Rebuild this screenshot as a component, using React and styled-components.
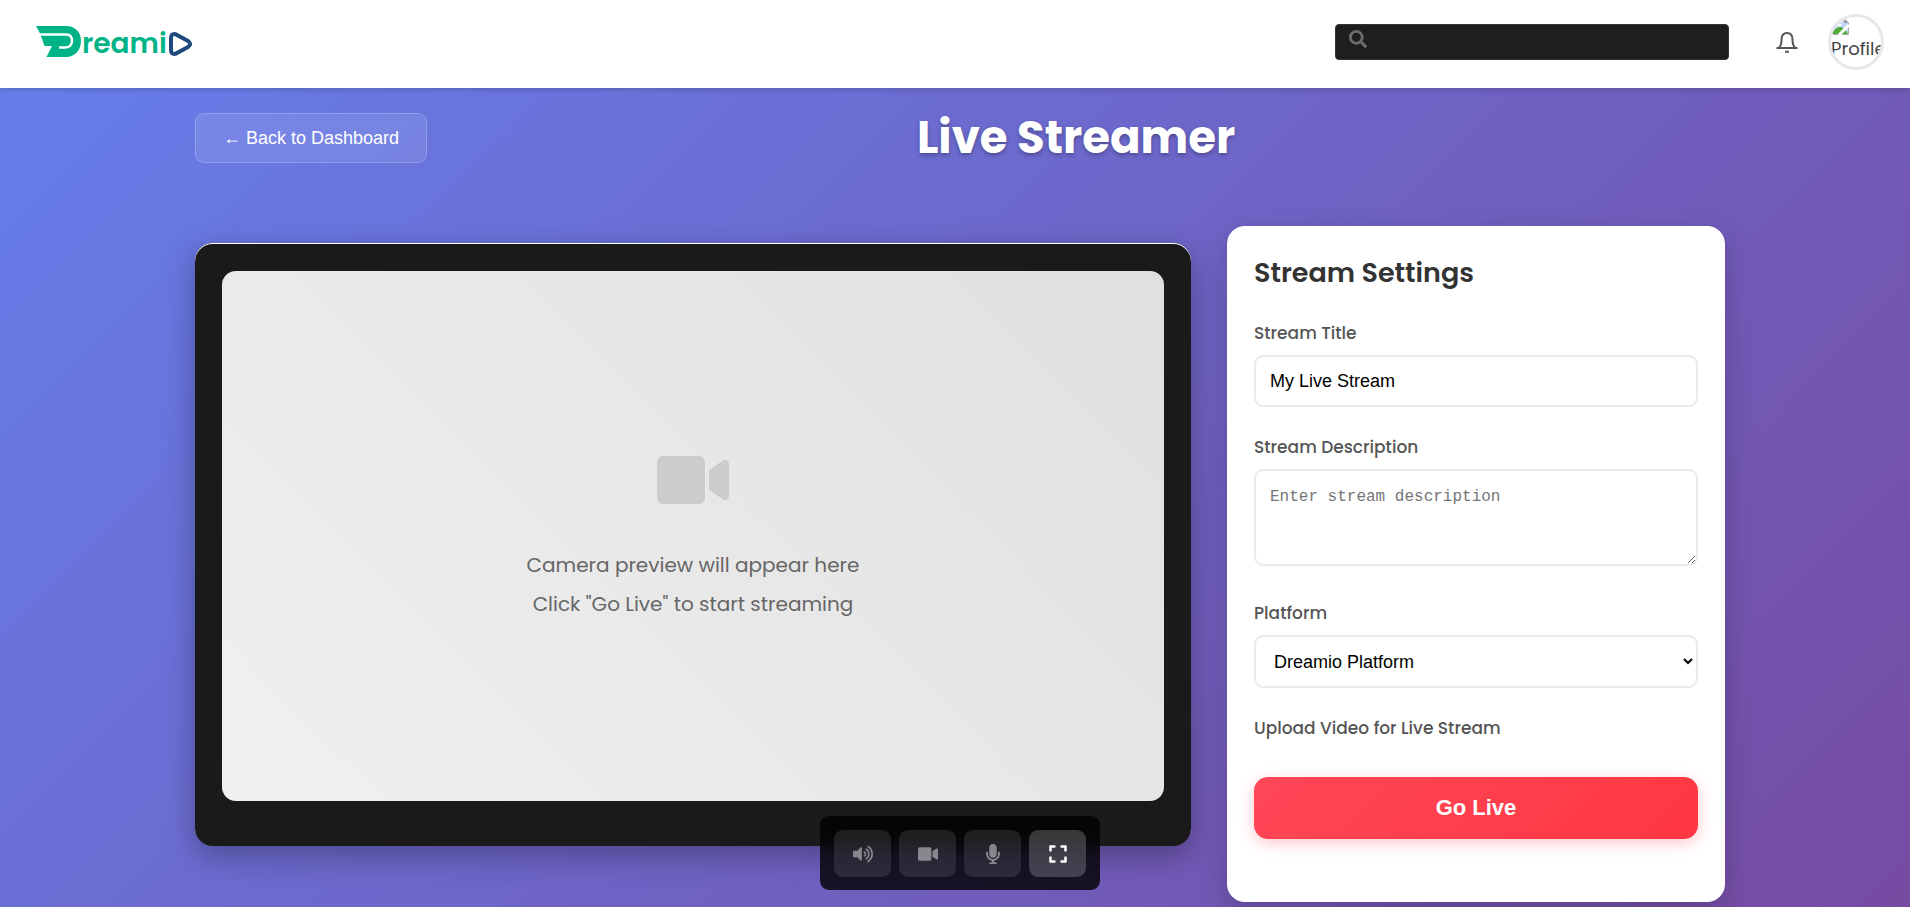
import React from "react";
import styled, { createGlobalStyle, css } from "styled-components";
import { FaSearch, FaVideo, FaVolumeUp, FaMicrophone, FaExpand } from "react-icons/fa";

const display = `Poppins, Inter, "Open Sans", sans-serif`;
const system = `Arial, "Liberation Sans", sans-serif`;

const GlobalStyle = createGlobalStyle`
  * { box-sizing: border-box; }
  body { margin: 0; font-family: ${display}; color: #333; }
  h1, h2, p { margin: 0; }
`;

const Page = styled.div`
  min-height: 100vh;
  display: flex;
  flex-direction: column;
`;

const TopBar = styled.header`
  position: relative;
  z-index: 1;
  height: 88px;
  padding: 0 26px 4px 36px;
  display: flex;
  align-items: center;
  background: #fff;
  box-shadow: 0 2px 5px rgba(0, 0, 0, 0.15);
`;

const LogoLink = styled.a`
  display: flex;
  margin-right: auto;
`;

const LogoMark = styled.svg`
  overflow: visible;
`;

const SearchBox = styled.label`
  width: 394px;
  height: 36px;
  padding: 5px 13px;
  display: flex;
  align-items: flex-start;
  gap: 12px;
  background: #1e1e1e;
  border: 1px solid #333;
  border-radius: 4px;
  color: #6b6b6b;
  font-size: 18px;
`;

const SearchInput = styled.input`
  flex: 1;
  min-width: 0;
  border: 0;
  outline: 0;
  background: transparent;
  color: #fff;
  font: 16px ${system};
`;

const BellButton = styled.button`
  margin: 0 30px 0 47px;
  padding: 0;
  display: flex;
  border: 0;
  background: none;
  color: #555;
`;

const Profile = styled.a`
  width: 56px;
  height: 56px;
  padding-top: 1px;
  display: flex;
  flex-direction: column;
  border: 3px solid #e5e7eb;
  border-radius: 50%;
  overflow: hidden;
  color: #444;
  font: 18px/28px ${display};
  text-decoration: none;
`;

const Main = styled.main`
  position: relative;
  flex: 1;
  padding: 25px 0 4px 10px;
  background: linear-gradient(135deg, #667eea 0%, #764ba2 100%);
`;

const Container = styled.div`
  max-width: 1530px;
  margin: 0 auto;
`;

const TitleRow = styled.div`
  display: flex;
  align-items: center;
  margin-bottom: 63px;
`;

const BackButton = styled.button`
  height: 50px;
  padding: 0 27px;
  border: 1px solid rgba(255, 255, 255, 0.2);
  border-radius: 9px;
  background: rgba(255, 255, 255, 0.1);
  color: #fff;
  font: 18px ${system};
`;

const PageTitle = styled.h1`
  flex: 1;
  text-align: center;
  color: #fff;
  font-size: 45px;
  line-height: 48px;
  font-weight: 700;
  text-shadow: 0 2px 4px rgba(0, 0, 0, 0.3);
`;

const Columns = styled.div`
  display: grid;
  grid-template-columns: minmax(0, 2fr) minmax(0, 1fr);
  gap: 36px;
  align-items: start;
`;

const VideoPanel = styled.section`
  margin-top: 17px;
  padding: 28px 27px 45px;
  border-radius: 18px;
  background: #1a1a1a;
  box-shadow: 0 10px 30px rgba(0, 0, 0, 0.3), inset 0 1px 0 #fff;
`;

const Preview = styled.div`
  aspect-ratio: 16 / 9;
  padding-bottom: 3px;
  display: flex;
  flex-direction: column;
  align-items: center;
  justify-content: center;
  border-radius: 14px;
  background: linear-gradient(45deg, #f0f0f0, #e0e0e0);
  color: #666;
  font-size: 20px;
  line-height: 39px;
`;

const CameraIcon = styled(FaVideo)`
  margin-bottom: 30px;
  color: #ccc;
`;

const Settings = styled.section`
  padding: 27px 27px 63px;
  border-radius: 18px;
  background: #fff;
  box-shadow: 0 10px 30px rgba(0, 0, 0, 0.2);
`;

const SettingsTitle = styled.h2`
  margin-bottom: 27px;
  font-size: 27px;
  line-height: 40px;
  font-weight: 600;
`;

const Field = styled.div`
  display: flex;
  flex-direction: column;
  gap: 9px;
  margin-bottom: 27px;
`;

const UploadField = styled(Field)`
  padding-bottom: 9px;
`;

const Label = styled.label`
  color: #555;
  font-size: 17px;
  line-height: 26px;
  font-weight: 500;
`;

const control = css`
  width: 100%;
  padding: 14px;
  border: 2px solid #e9ecef;
  border-radius: 9px;
  background: #fff;
  color: #000;
  font: 18px ${system};
`;

const TextInput = styled.input`
  ${control}
  height: 52px;
`;

const TextArea = styled.textarea`
  ${control}
  display: block;
  height: 97px;
  margin-bottom: 7px;
  font: 16px/24px Consolas, "Liberation Mono", monospace;
  resize: vertical;

  &::placeholder { color: #757575; }
`;

const Select = styled.select`
  ${control}
  height: 53px;
  padding: 12px 0 12px 14px;
`;

const FileInput = styled.input`
  display: none;
`;

const GoLiveButton = styled.button`
  width: 100%;
  height: 62px;
  border: 0;
  border-radius: 14px;
  background: linear-gradient(135deg, #ff4757, #ff3742);
  box-shadow: 0 4px 15px rgba(255, 71, 87, 0.3);
  color: #fff;
  font: bold 22px ${system};
`;

const Controls = styled.div`
  position: fixed;
  left: calc(50% + 5px);
  bottom: 17px;
  transform: translateX(-50%);
  padding: 14px 14px 13px;
  display: flex;
  gap: 8px;
  border-radius: 9px;
  background: rgba(0, 0, 0, 0.8);
  backdrop-filter: blur(10px);
`;

const ControlButton = styled.button`
  width: 57px;
  height: 47px;
  padding: 0;
  display: flex;
  align-items: center;
  justify-content: center;
  border: 0;
  border-radius: 9px;
  background: rgba(255, 255, 255, 0.2);
  color: #fff;
  font-size: 20px;

  &:disabled { opacity: 0.5; }
`;

function Logo() {
  return (
    <LogoMark width="160" height="32" viewBox="0 0 160 32" role="img" aria-label="Dreamio">
      <path d="M0 0H30C40 0 45 7 45 15C45 24 39 31 30 31H10.500L16 20H8.500L4 7.500Z" fill="#00b386" />
      <path d="M2 8.500H30C34 8.500 36 11 36 15C36 19 33 21.500 29 21.500H23" fill="none" stroke="#fff" strokeWidth="2.500" />
      <text x="46" y="27" fill="#00b386" fontFamily={display} fontSize="28" fontWeight="600">reami</text>
      <path d="M135 12C135 8 138 7 141 9L152 15C155 17 155 19 152 21L141 27C138 29 135 28 135 24Z" fill="none" stroke="#1f497d" strokeWidth="4" />
    </LogoMark>
  );
}

function BellIcon() {
  return (
    <svg width="22" height="21" viewBox="0 0 22 21" fill="none" stroke="currentColor" strokeWidth="2">
      <path d="M.5 16H21.500M2.500 16C5 14.500 5.500 12.500 5.500 7.500C5.500 3 8 1 11 1S16.500 3 16.500 7.500C16.500 12.500 17 14.500 19.500 16M9 19.800H13" />
    </svg>
  );
}

// Placeholder drawn where the profile photo is missing
function BrokenImageIcon() {
  return (
    <svg width="18" height="17" viewBox="0 0 18 17" aria-hidden="true">
      <path d="M2 .5H13L17.500 5V16.500H2Z" fill="#c3d7f7" stroke="#aaa" />
      <path d="M5 6C5 4 8 4 8.500 5.500C10.500 5.500 10.500 8 9 8H5C3.500 8 3.500 6 5 6Z" fill="#fff" />
      <path d="M1 16C3 11 6 9 9 9S15 12 17 16Z" fill="#4fae33" />
      <path d="M8 17L18 7" stroke="#fff" strokeWidth="3" />
      <path d="M13 .5V5H17.500Z" fill="#999" />
    </svg>
  );
}

export default function App() {
  return (
    <Page>
      <GlobalStyle />
      <TopBar>
        <LogoLink href="#"><Logo /></LogoLink>
        <SearchBox><FaSearch /><SearchInput type="text" aria-label="Search" /></SearchBox>
        <BellButton aria-label="Notifications"><BellIcon /></BellButton>
        <Profile href="#"><BrokenImageIcon />Profile</Profile>
      </TopBar>
      <Main>
        <Container>
          <TitleRow>
            <BackButton>← Back to Dashboard</BackButton>
            <PageTitle>Live Streamer</PageTitle>
          </TitleRow>
          <Columns>
            <VideoPanel>
              <Preview>
                <CameraIcon size={72} />
                <p>Camera preview will appear here</p>
                <p>Click "Go Live" to start streaming</p>
              </Preview>
            </VideoPanel>
            <Settings>
              <SettingsTitle>Stream Settings</SettingsTitle>
              <Field>
                <Label htmlFor="title">Stream Title</Label>
                <TextInput id="title" defaultValue="My Live Stream" />
              </Field>
              <Field>
                <Label htmlFor="description">Stream Description</Label>
                <TextArea id="description" placeholder="Enter stream description" />
              </Field>
              <Field>
                <Label htmlFor="platform">Platform</Label>
                <Select id="platform"><option>Dreamio Platform</option></Select>
              </Field>
              <UploadField>
                <Label htmlFor="video">Upload Video for Live Stream</Label>
                <FileInput id="video" type="file" accept="video/*" />
              </UploadField>
              <GoLiveButton>Go Live</GoLiveButton>
            </Settings>
          </Columns>
        </Container>
        <Controls>
          <ControlButton disabled aria-label="Volume"><FaVolumeUp /></ControlButton>
          <ControlButton disabled aria-label="Camera"><FaVideo /></ControlButton>
          <ControlButton disabled aria-label="Microphone"><FaMicrophone /></ControlButton>
          <ControlButton aria-label="Fullscreen"><FaExpand /></ControlButton>
        </Controls>
      </Main>
    </Page>
  );
}
